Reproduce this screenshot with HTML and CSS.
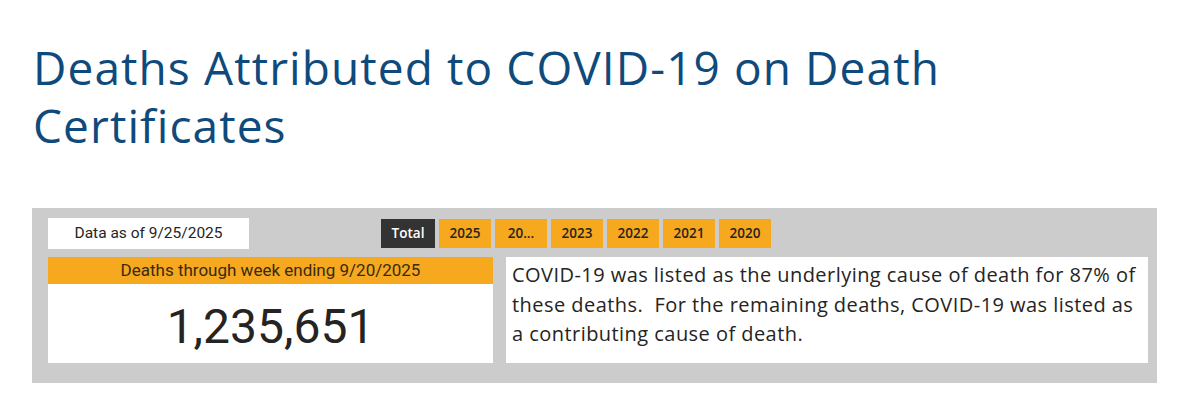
FILE: index.html
```html
<!DOCTYPE html>
<html lang="en">
<head>
    <meta charset="UTF-8">
    <title>Deaths Attributed to COVID-19</title>
    <link rel="stylesheet" href="styles.css">
</head>
<body>
    <h1 class="page_title">Deaths Attributed to COVID-19 on Death Certificates</h1>
    <div class="panel">
        <div class="top_row">
            <div class="data_date">Data as of 9/25/2025</div>
            <ul class="year_tabs">
                <li class="active">Total</li>
                <li>2025</li>
                <li>20...</li>
                <li>2023</li>
                <li>2022</li>
                <li>2021</li>
                <li>2020</li>
            </ul>
        </div>
        <div class="main_row">
            <div class="count_card">
                <div class="count_head">Deaths through week ending 9/20/2025</div>
                <div class="count_value">1,235,651</div>
            </div>
            <div class="note_box">
                <p>COVID-19 was listed as the underlying cause of death for 87% of these deaths.&nbsp; For the remaining deaths, COVID-19 was listed as a contributing cause of death.</p>
            </div>
        </div>
    </div>
</body>
</html>
```

FILE: styles.css
```css
body,ul,li,h1,p{margin: 0;padding: 0;}
li{list-style: none;}
body{
    background: #fff;
    font-family: "Open Sans", sans-serif;
}
.page_title{
    margin: 38px 0 0 33px;
    width: 1000px;
    font-family: "Open Sans", sans-serif;
    font-weight: 400;
    font-size: 46px;
    line-height: 58px;
    letter-spacing: 1.1px;
    color: #0f4a7c;
}
.panel{
    margin: 54px 0 0 32px;
    width: 1125px;
    height: 175px;
    box-sizing: border-box;
    padding: 10px 9px 0 16px;
    background: #cccccc;
}
.top_row{
    display: flex;
    align-items: flex-start;
    height: 31px;
}
.data_date{
    width: 201px;
    height: 31px;
    line-height: 31px;
    text-align: center;
    background: #fff;
    color: #252423;
    font-family: "Roboto", sans-serif;
    font-size: 15.5px;
}
.year_tabs{
    display: flex;
    gap: 4px;
    margin: 1px 0 0 132px;
}
.year_tabs li{
    width: 52px;
    height: 29px;
    line-height: 29px;
    text-align: center;
    background: #f6a81f;
    color: #252423;
    font-family: "Open Sans", sans-serif;
    font-weight: 600;
    font-size: 13.5px;
}
.year_tabs li.active{
    width: 54px;
    background: #333;
    color: #fff;
}
.main_row{
    display: flex;
    gap: 13px;
    margin-top: 8px;
}
.count_card{
    width: 445px;
}
.count_head{
    height: 27px;
    line-height: 27px;
    text-align: center;
    background: #f6a81f;
    color: #3a2a10;
    font-family: "Roboto", sans-serif;
    font-size: 17px;
}
.count_value{
    height: 79px;
    line-height: 86px;
    text-align: center;
    background: #fff;
    color: #252423;
    font-family: "Roboto", sans-serif;
    font-size: 48px;
}
.note_box{
    width: 642px;
    height: 106px;
    box-sizing: border-box;
    padding: 3px 4px 0 6px;
    background: #fff;
}
.note_box p{
    font-family: "Open Sans", sans-serif;
    font-size: 20px;
    line-height: 29.5px;
    letter-spacing: 0.45px;
    color: #252423;
}
```
